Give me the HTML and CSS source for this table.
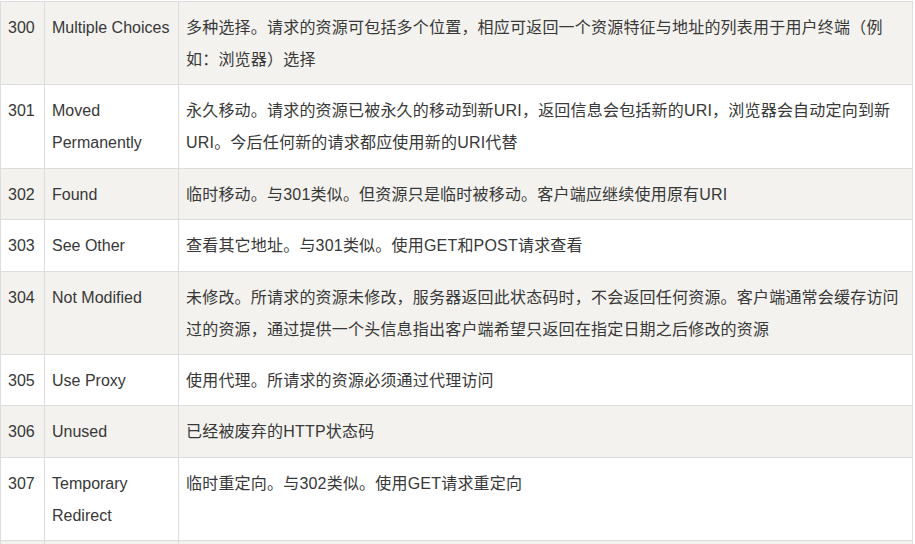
FILE: index.html
```html
<!DOCTYPE html>
<html lang="zh-CN">
<head>
    <meta charset="UTF-8">
    <meta name="viewport" content="width=device-width, initial-scale=1.0">
    <title>HTTP状态码 3xx</title>
    <link rel="stylesheet" href="styles.css">
</head>
<body>
    <table class="status-table">
        <colgroup>
            <col class="col-code">
            <col class="col-name">
            <col class="col-desc">
        </colgroup>
        <tbody>
            <tr>
                <td>300</td>
                <td>Multiple Choices</td>
                <td class="desc">多种选择。请求的资源可包括多个位置，相应可返回一个资源特征与地址的列表用于用户终端（例如：浏览器）选择</td>
            </tr>
            <tr>
                <td>301</td>
                <td>Moved Permanently</td>
                <td class="desc">永久移动。请求的资源已被永久的移动到新URI，返回信息会包括新的URI，浏览器会自动定向到新URI。今后任何新的请求都应使用新的URI代替</td>
            </tr>
            <tr>
                <td>302</td>
                <td>Found</td>
                <td class="desc">临时移动。与301类似。但资源只是临时被移动。客户端应继续使用原有URI</td>
            </tr>
            <tr>
                <td>303</td>
                <td>See Other</td>
                <td class="desc">查看其它地址。与301类似。使用GET和POST请求查看</td>
            </tr>
            <tr>
                <td>304</td>
                <td>Not Modified</td>
                <td class="desc">未修改。所请求的资源未修改，服务器返回此状态码时，不会返回任何资源。客户端通常会缓存访问过的资源，通过提供一个头信息指出客户端希望只返回在指定日期之后修改的资源</td>
            </tr>
            <tr>
                <td>305</td>
                <td>Use Proxy</td>
                <td class="desc">使用代理。所请求的资源必须通过代理访问</td>
            </tr>
            <tr>
                <td>306</td>
                <td>Unused</td>
                <td class="desc">已经被废弃的HTTP状态码</td>
            </tr>
            <tr>
                <td>307</td>
                <td>Temporary Redirect</td>
                <td class="desc">临时重定向。与302类似。使用GET请求重定向</td>
            </tr>
            <!-- next row starts just below the fold -->
            <tr class="next-row">
                <td></td>
                <td></td>
                <td class="desc"></td>
            </tr>
        </tbody>
    </table>
</body>
</html>
```

FILE: styles.css
```css
body {
    margin: 0;
    padding: 0;
    background-color: #fff;
    font-family: "Liberation Sans", Arial, "Noto Sans CJK SC", sans-serif;
    font-size: 16px;
    color: #383838;
}

.status-table {
    width: 913px;
    margin-top: 1px;
    border-collapse: collapse;
    table-layout: fixed;
}

.col-code {
    width: 44px;
}

.col-name {
    width: 134px;
}

.status-table td {
    border: 1px solid #ddd;
    padding: 10px 7px 8.4px;
    line-height: 32px;
    vertical-align: top;
}

.status-table tr:nth-child(odd) td {
    background-color: #f3f2ee;
}

.status-table td.desc {
    letter-spacing: 0.2px;
}

.status-table .next-row td {
    height: 32px;
}
```
